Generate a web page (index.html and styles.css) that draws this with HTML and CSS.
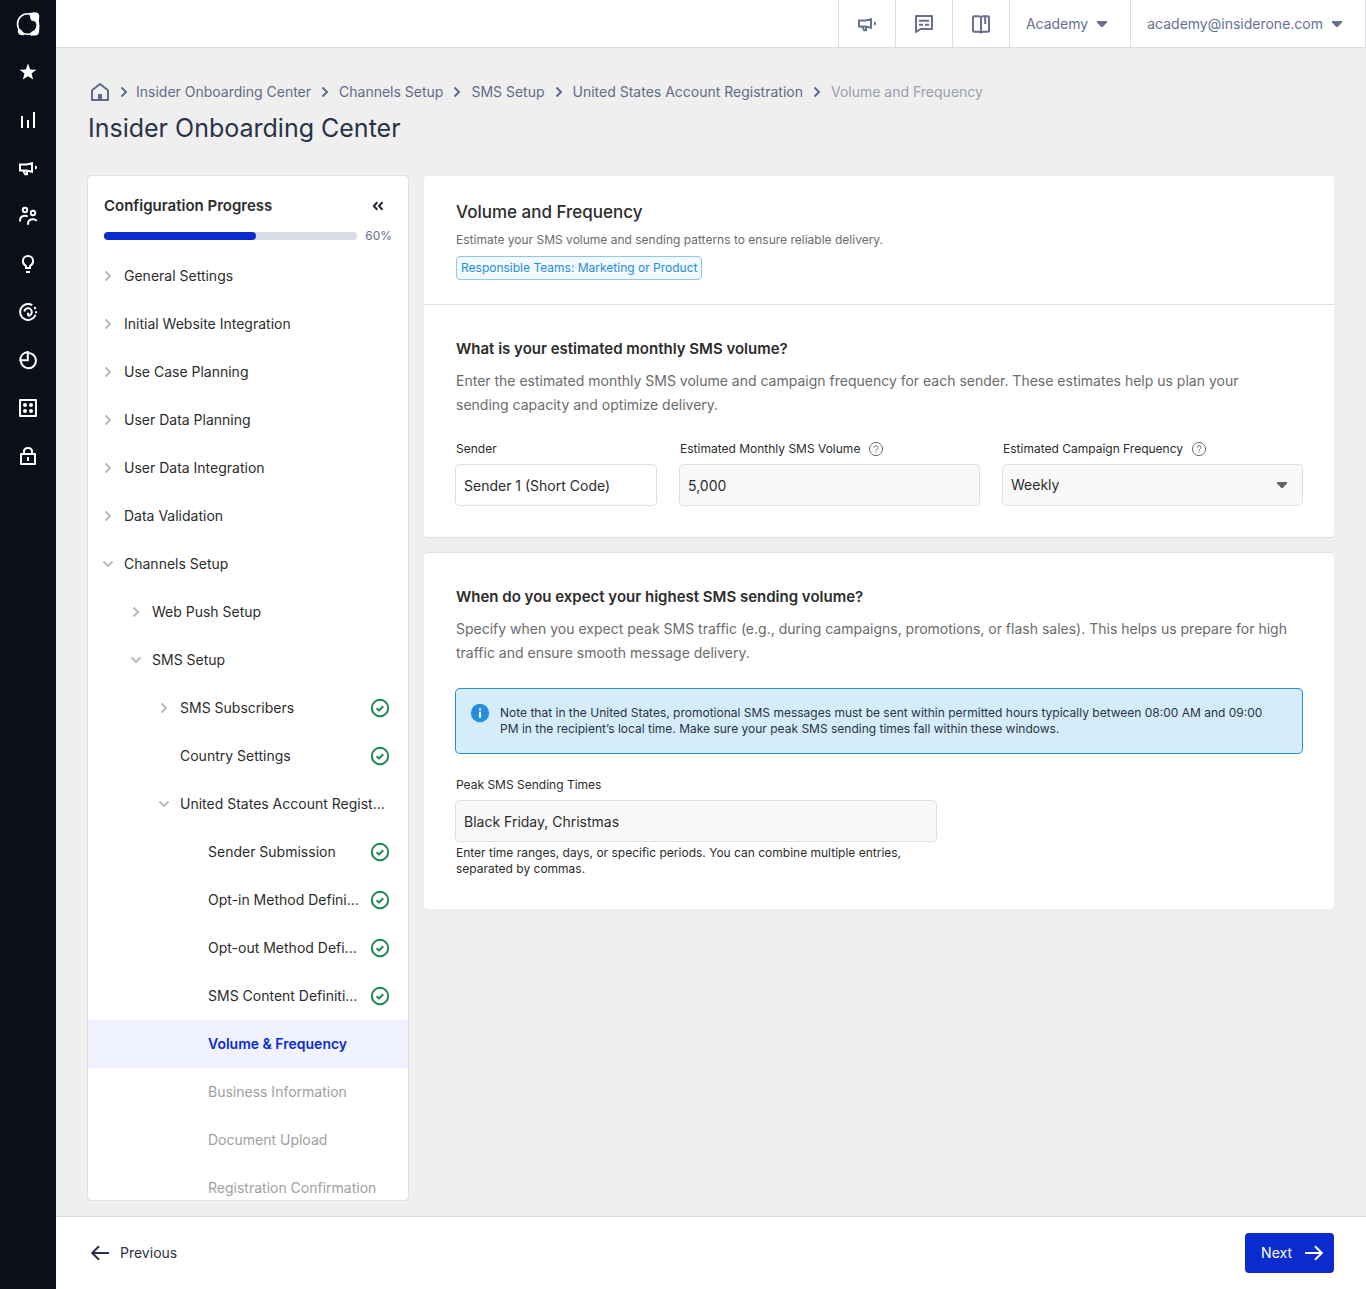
FILE: index.html
```
<!DOCTYPE html>
<html lang="en">
<head>
    <meta charset="UTF-8">
    <meta name="viewport" content="width=device-width, initial-scale=1">
    <title>Insider Onboarding Center</title>
    <link rel="stylesheet" href="styles.css">
</head>
<body>
    <!-- shared icons -->
    <svg class="sprite" aria-hidden="true">
        <symbol id="megaphone" viewBox="0 0 24 24">
            <path d="M4 8.500h6.500l5.500-1.300v8.600l-5.500-1.300H4zM7 14.500l2.200 3.700h1.800v-3.500" fill="none" stroke="currentColor" stroke-width="2"/>
            <path d="M19 9.500a2 2 0 0 1 0 4z" fill="currentColor"/>
        </symbol>
        <symbol id="caret" viewBox="0 0 24 24">
            <path d="M7 9h10v1.500L12.700 15h-1.400L7 10.500z" fill="currentColor"/>
        </symbol>
        <symbol id="sep" viewBox="0 0 24 24">
            <path d="M9.500 7.500L14 12l-4.500 4.500" fill="none" stroke="currentColor" stroke-width="2"/>
        </symbol>
        <symbol id="chevron" viewBox="0 0 16 16">
            <path d="M5.500 3.500L10 8l-4.500 4.500" fill="none" stroke="currentColor" stroke-width="2"/>
        </symbol>
        <symbol id="check" viewBox="0 0 24 24">
            <circle cx="12" cy="12" r="8.200" fill="none" stroke="currentColor" stroke-width="1.900"/>
            <path d="M8.600 12.200l2.300 2.200 4.400-4.200" fill="none" stroke="currentColor" stroke-width="1.900"/>
        </symbol>
        <symbol id="help" viewBox="0 0 16 16">
            <circle cx="8" cy="8" r="6.600" fill="none" stroke="currentColor"/>
            <path d="M6.100 6.600a1.900 1.900 0 1 1 2.900 1.600c-.7.500-1 .7-1 1.400M8 10.600v1.100" fill="none" stroke="currentColor"/>
        </symbol>
    </svg>

    <div class="app">
        <nav class="rail" aria-label="Main">
            <a href="#" aria-label="Home">
                <svg viewBox="0 0 24 24">
                    <circle cx="11.700" cy="12" r="10.200" fill="none" stroke="currentColor" stroke-width="1.600"/>
                    <path fill="currentColor" d="M12 1c2 0 3-.5 5-.6 3.500-.3 6.300.6 6.300 3.600 0 2-.7 3.500-.3 6 .5 2.600.7 5 .2 7.500-.3 1.700.1 2.500-.3 3.600-.6 2.200-2.700 2.500-4.900 2.500-1.500 0-2.500.2-3.500-.1 0-1.500-.3-2.500 1-3.700 1.200-1 2.700-1 3.700-2.600 1-1.700 1.400-3.500 1.100-5.200-.3-1.600-1.300-2.700-3-3-1.900-.3-3-1.500-3.100-3.300-.1-2-.4-3.200-2.200-4.700zM2 17.300c1.300 0 2.900 0 3.700 1 .8.900.8 1.700 1.200 2.500L8.500 23c-1.500.4-3.500.2-5-.6-1.300-.8-1.700-2-1.700-3.200z"/>
                </svg>
            </a>
            <a href="#" aria-label="Favorites">
                <svg viewBox="0 0 24 24"><path fill="currentColor" d="M12 3.500l2.200 5.900 6.200.3-4.900 3.900 1.700 6-5.200-3.400-5.200 3.400 1.700-6-4.900-3.900 6.200-.3z"/></svg>
            </a>
            <a href="#" aria-label="Analytics">
                <svg viewBox="0 0 24 24"><path fill="none" stroke="currentColor" stroke-width="2" d="M6 8v12M12 12v8M18 4v16"/></svg>
            </a>
            <a href="#" aria-label="Campaigns">
                <svg viewBox="0 0 24 24"><use href="#megaphone"/></svg>
            </a>
            <a href="#" aria-label="Audience">
                <svg viewBox="0 0 24 24"><g fill="none" stroke="currentColor" stroke-width="2"><circle cx="9" cy="6" r="2.200"/><circle cx="17" cy="9" r="2.200"/><path d="M4 17.500v-.7c0-3 2-5 5-5 1.200 0 2.100.3 2.800.7M12 20.800v-.6c0-3 2-4.900 5-4.900 1.600 0 2.900.5 3.800 1.500"/></g></svg>
            </a>
            <a href="#" aria-label="Recommendations">
                <svg viewBox="0 0 24 24"><path fill="none" stroke="currentColor" stroke-width="2" d="M10 17v-2.800C8 13 6.900 11.300 6.900 9a5.100 5.100 0 0 1 10.200 0c0 2.300-1.100 4-3.100 5.200V16h-4M10 20h4"/></svg>
            </a>
            <a href="#" aria-label="Experience">
                <svg viewBox="0 0 24 24"><g fill="none" stroke="currentColor" stroke-width="2"><path d="M16.200 5.100A8 8 0 1 0 19.500 14.800"/><path d="M18.300 7a8 8 0 0 1 1.200 2.200M20.100 11.300l-.1 2"/><path d="M8.400 11.500a3.700 3.700 0 1 1 3.600 4.200M12 15.700v-3"/></g></svg>
            </a>
            <a href="#" aria-label="Reports">
                <svg viewBox="0 0 24 24"><g fill="none" stroke="currentColor" stroke-width="2"><path d="M12.500 5a7.600 7.600 0 1 1-7.700 7.800"/><path d="M11.800 4v8.200H4.200C4.300 7.800 7.500 4.500 11.800 4z"/></g></svg>
            </a>
            <a href="#" aria-label="Components">
                <svg viewBox="0 0 24 24"><path fill="none" stroke="currentColor" stroke-width="2" stroke-linejoin="round" d="M4 4h16v16H4z"/><g fill="currentColor"><circle cx="9" cy="9" r="2"/><circle cx="15" cy="9" r="2"/><circle cx="9" cy="15" r="2"/><circle cx="15" cy="15" r="2"/></g></svg>
            </a>
            <a href="#" aria-label="Security">
                <svg viewBox="0 0 24 24"><path fill="none" stroke="currentColor" stroke-width="2" stroke-linejoin="round" d="M5 10h14v10H5zM8 10V7.500C8 5.300 9.700 4 12 4s4 1.300 4 3.500V10M12 13v4"/></svg>
            </a>
        </nav>

        <div class="page">
            <header class="topbar">
                <button class="topbar-item" aria-label="Announcements"><svg viewBox="0 0 24 24"><use href="#megaphone"/></svg></button>
                <button class="topbar-item" aria-label="Messages">
                    <svg viewBox="0 0 24 24"><path fill="none" stroke="currentColor" stroke-width="2" stroke-linejoin="round" d="M4 4h16v13H8.500L4 20zM7 8.700h10M7 12.700h4M13 12.700h4"/></svg>
                </button>
                <button class="topbar-item" aria-label="Documentation">
                    <svg viewBox="0 0 24 24"><path fill="none" stroke="currentColor" stroke-width="2" d="M5 4.200h5l2 1 2-1h5q1 0 1 1v13.500q0 1-1 1h-5l-2 .8-2-.8H5q-1 0-1-1V5.200q0-1 1-1zM12 5v15M16.200 5v7"/></svg>
                </button>
                <button class="topbar-item">Academy<svg viewBox="0 0 24 24"><use href="#caret"/></svg></button>
                <button class="topbar-item">academy@insiderone.com<svg viewBox="0 0 24 24"><use href="#caret"/></svg></button>
            </header>

            <main class="main">
                <nav class="breadcrumb" aria-label="Breadcrumb">
                    <a href="#" aria-label="Home"><svg viewBox="0 0 24 24"><path fill="none" stroke="currentColor" stroke-width="2" stroke-linejoin="round" d="M4 10.200L12 4l8 6.200V20H4z"/><path fill="currentColor" d="M10 14h4v6h-4z"/></svg></a>
                    <svg viewBox="0 0 24 24"><use href="#sep"/></svg>
                    <a href="#">Insider Onboarding Center</a>
                    <svg class="sep" viewBox="0 0 24 24"><use href="#sep"/></svg>
                    <a href="#">Channels Setup</a>
                    <svg class="sep" viewBox="0 0 24 24"><use href="#sep"/></svg>
                    <a href="#">SMS Setup</a>
                    <svg class="sep" viewBox="0 0 24 24"><use href="#sep"/></svg>
                    <a href="#">United States Account Registration</a>
                    <svg class="sep" viewBox="0 0 24 24"><use href="#sep"/></svg>
                    <span class="current">Volume and Frequency</span>
                </nav>
                <h1>Insider Onboarding Center</h1>

                <div class="columns">
                    <aside class="progress-panel">
                        <div class="panel-head">
                            <h2>Configuration Progress</h2>
                            <button class="collapse" aria-label="Collapse"><svg viewBox="0 0 24 24"><path fill="none" stroke="currentColor" stroke-width="2" d="M11.300 8.300L7.800 12l3.500 3.700M16.500 8.300L13 12l3.500 3.700"/></svg></button>
                        </div>
                        <div class="progress">
                            <div class="bar"><div class="bar-fill" style="width: 60%"></div></div>
                            <span>60%</span>
                        </div>
                        <ul class="tree">
                            <li><a href="#" class="node"><svg class="arrow"><use href="#chevron"/></svg><span>General Settings</span></a></li>
                            <li><a href="#" class="node"><svg class="arrow"><use href="#chevron"/></svg><span>Initial Website Integration</span></a></li>
                            <li><a href="#" class="node"><svg class="arrow"><use href="#chevron"/></svg><span>Use Case Planning</span></a></li>
                            <li><a href="#" class="node"><svg class="arrow"><use href="#chevron"/></svg><span>User Data Planning</span></a></li>
                            <li><a href="#" class="node"><svg class="arrow"><use href="#chevron"/></svg><span>User Data Integration</span></a></li>
                            <li><a href="#" class="node"><svg class="arrow"><use href="#chevron"/></svg><span>Data Validation</span></a></li>
                            <li><a href="#" class="node"><svg class="arrow open"><use href="#chevron"/></svg><span>Channels Setup</span></a></li>
                            <li><a href="#" class="node level-1"><svg class="arrow"><use href="#chevron"/></svg><span>Web Push Setup</span></a></li>
                            <li><a href="#" class="node level-1"><svg class="arrow open"><use href="#chevron"/></svg><span>SMS Setup</span></a></li>
                            <li><a href="#" class="node level-2"><svg class="arrow"><use href="#chevron"/></svg><span>SMS Subscribers</span><svg class="done"><use href="#check"/></svg></a></li>
                            <li><a href="#" class="node level-2 leaf"><span>Country Settings</span><svg class="done"><use href="#check"/></svg></a></li>
                            <li><a href="#" class="node level-2"><svg class="arrow open"><use href="#chevron"/></svg><span>United States Account Regist...</span></a></li>
                            <li><a href="#" class="node level-3"><span>Sender Submission</span><svg class="done"><use href="#check"/></svg></a></li>
                            <li><a href="#" class="node level-3"><span>Opt-in Method Defini...</span><svg class="done"><use href="#check"/></svg></a></li>
                            <li><a href="#" class="node level-3"><span>Opt-out Method Defi...</span><svg class="done"><use href="#check"/></svg></a></li>
                            <li><a href="#" class="node level-3"><span>SMS Content Definiti...</span><svg class="done"><use href="#check"/></svg></a></li>
                            <li><a href="#" class="node level-3 active" aria-current="page"><span>Volume &amp; Frequency</span></a></li>
                            <li><a class="node level-3 disabled"><span>Business Information</span></a></li>
                            <li><a class="node level-3 disabled"><span>Document Upload</span></a></li>
                            <li><a class="node level-3 disabled"><span>Registration Confirmation</span></a></li>
                        </ul>
                    </aside>

                    <div class="content">
                        <section class="card">
                            <div class="card-head">
                                <h2>Volume and Frequency</h2>
                                <p>Estimate your SMS volume and sending patterns to ensure reliable delivery.</p>
                                <span class="tag">Responsible Teams: Marketing or Product</span>
                            </div>
                            <div class="card-body">
                                <h3>What is your estimated monthly SMS volume?</h3>
                                <p class="lead">Enter the estimated monthly SMS volume and campaign frequency for each sender. These estimates help us plan your sending capacity and optimize delivery.</p>
                                <div class="fields">
                                    <div class="field sender">
                                        <label for="sender">Sender</label>
                                        <input id="sender" class="plain" type="text" value="Sender 1 (Short Code)">
                                    </div>
                                    <div class="field">
                                        <label for="volume">Estimated Monthly SMS Volume <svg><use href="#help"/></svg></label>
                                        <input id="volume" type="text" value="5,000">
                                    </div>
                                    <div class="field">
                                        <label for="frequency">Estimated Campaign Frequency <svg><use href="#help"/></svg></label>
                                        <div class="select">
                                            <select id="frequency"><option>Weekly</option></select>
                                            <svg viewBox="0 0 24 24"><use href="#caret"/></svg>
                                        </div>
                                    </div>
                                </div>
                            </div>
                        </section>

                        <section class="card">
                            <div class="card-body">
                                <h3>When do you expect your highest SMS sending volume?</h3>
                                <p class="lead">Specify when you expect peak SMS traffic (e.g., during campaigns, promotions, or flash sales). This helps us prepare for high traffic and ensure smooth message delivery.</p>
                                <div class="alert">
                                    <svg viewBox="0 4 24 16"><circle cx="12" cy="12" r="9.200" fill="#238ee0"/><path fill="#fff" d="M11 7.200h2v2h-2zM11 10.800h2v6h-2z"/></svg>
                                    <p>Note that in the United States, promotional SMS messages must be sent within permitted hours typically between 08:00 AM and 09:00 PM in the recipient’s local time. Make sure your peak SMS sending times fall within these windows.</p>
                                </div>
                                <div class="field peak">
                                    <label for="peak">Peak SMS Sending Times</label>
                                    <input id="peak" type="text" value="Black Friday, Christmas">
                                    <p class="hint">Enter time ranges, days, or specific periods. You can combine multiple entries, separated by commas.</p>
                                </div>
                            </div>
                        </section>
                    </div>
                </div>
            </main>

            <footer class="footer">
                <button class="btn"><svg viewBox="0 0 24 24"><path fill="none" stroke="currentColor" stroke-width="2" d="M21 12H4M11 5.200L4.200 12l6.800 6.800"/></svg>Previous</button>
                <button class="btn primary">Next<svg viewBox="0 0 24 24"><path fill="none" stroke="currentColor" stroke-width="2" d="M3 12h17M13 5.200l6.800 6.800-6.800 6.800"/></svg></button>
            </footer>
        </div>
    </div>
</body>
</html>
```
FILE: styles.css
```
* {
    box-sizing: border-box;
}

body {
    margin: 0;
    font-family: Inter, "Liberation Sans", sans-serif;
    font-size: 14px;
    line-height: 24px;
    color: #2c2c2c;
    background: #efefef;
}

h1, h2, h3, p, ul {
    margin: 0;
    padding: 0;
}

a {
    color: inherit;
    text-decoration: none;
}

button, input, select {
    font: inherit;
    color: inherit;
}

button {
    padding: 0;
    border: 0;
    background: none;
    cursor: pointer;
}

svg {
    display: block;
    flex: none;
    width: 24px;
    height: 24px;
}

.sprite {
    position: absolute;
    width: 0;
    height: 0;
}

.app {
    display: flex;
    height: 100vh;
}

/* dark icon rail */
.rail {
    flex: none;
    width: 56px;
    background: #0a0f1a;
    color: #fff;
}

.rail a {
    display: flex;
    align-items: center;
    justify-content: center;
    height: 48px;
}

.page {
    flex: 1;
    min-width: 0;
    display: flex;
    flex-direction: column;
}

/* top bar */
.topbar {
    flex: none;
    display: flex;
    justify-content: flex-end;
    height: 48px;
    background: #fff;
    border-bottom: 1px solid #dadce4;
    color: #66718f;
}

.topbar-item {
    display: flex;
    align-items: center;
    gap: 2px;
    padding: 0 16px;
    border-left: 1px solid #dadce4;
}

.topbar-item:last-child {
    border-right: 1px solid #dadce4;
}

/* main area */
.main {
    flex: 1;
    min-height: 0;
    display: flex;
    flex-direction: column;
    padding: 32px 32px 16px;
}

.breadcrumb {
    display: flex;
    align-items: center;
    color: #5f6b8a;
}

.breadcrumb .sep {
    margin: 0 2px;
}

.breadcrumb .current {
    color: #9a9fab;
}

h1 {
    margin-bottom: 24px;
    font-size: 25px;
    font-weight: 400;
    line-height: 48px;
    color: #2a3247;
}

.columns {
    flex: 1;
    min-height: 0;
    display: flex;
    gap: 16px;
}

/* configuration progress */
.progress-panel {
    flex: none;
    width: 320px;
    overflow: hidden;
    background: #fff;
    border-radius: 4px;
    box-shadow: 0 0 0 1px #dfdfdf;
}

.panel-head {
    display: flex;
    align-items: center;
    justify-content: space-between;
    padding: 16px 18px 8px 16px;
}

.panel-head h2 {
    font-size: 15px;
    font-weight: 600;
    line-height: 28px;
}

.collapse {
    color: #1f2637;
}

.progress {
    display: flex;
    align-items: center;
    gap: 8px;
    padding: 0 16px 8px;
    font-size: 12px;
    line-height: 16px;
    color: #66718f;
}

.bar {
    flex: 1;
    height: 8px;
    border-radius: 4px;
    background: #d9dce5;
}

.bar-fill {
    height: 8px;
    border-radius: 4px;
    background: #0a2bce;
}

.tree {
    list-style: none;
}

.node {
    display: flex;
    align-items: center;
    height: 48px;
    padding: 0 16px 0 12px;
}

.node span {
    flex: 1;
    min-width: 0;
    white-space: nowrap;
}

.level-1 {
    padding-left: 40px;
}

.level-2 {
    padding-left: 68px;
}

.level-2.leaf {
    padding-left: 92px;
}

.level-3 {
    padding-left: 120px;
}

.arrow {
    width: 16px;
    height: 16px;
    margin-right: 8px;
    color: #b9b9b9;
}

.arrow.open {
    transform: rotate(90deg);
}

.done {
    color: #138a4b;
}

.node.active {
    background: #f0f2ff;
    color: #0a2bce;
    font-weight: 600;
}

.node.disabled {
    color: #a0a0a0;
}

/* cards */
.content {
    flex: 1;
    min-width: 0;
    display: flex;
    flex-direction: column;
    gap: 16px;
}

.card {
    background: #fff;
    border-radius: 4px;
}

.card:first-child {
    box-shadow: 0 1px 0 #dfdfdf;
}

.card:last-child {
    box-shadow: 0 -1px 0 #dfdfdf;
}

.card-head {
    padding: 24px 32px;
    border-bottom: 1px solid #dfdfdf;
}

.card-head h2 {
    font-size: 17px;
    font-weight: 500;
}

.card-head p {
    margin: 8px 0;
    font-size: 12px;
    line-height: 16px;
    color: #6b6b6b;
}

.tag {
    display: block;
    width: fit-content;
    padding: 0 4px;
    border: 1px solid #8cc8f5;
    border-radius: 4px;
    background: #f2f9ff;
    font-size: 12px;
    line-height: 22px;
    color: #238ee0;
}

.card-body {
    padding: 32px;
}

h3 {
    font-size: 15px;
    font-weight: 600;
    line-height: 24px;
}

.lead {
    margin: 8px 0 24px;
    padding-right: 12px;
    color: #6b6b6b;
}

.fields {
    display: flex;
    gap: 24px;
}

.field {
    flex: 1;
    min-width: 0;
}

.field.sender {
    flex: 0 0 200px;
}

.field.peak {
    max-width: 480px;
}

.field label {
    display: flex;
    align-items: center;
    gap: 8px;
    margin-bottom: 8px;
    font-size: 12px;
    line-height: 16px;
}

.field label svg {
    width: 16px;
    height: 16px;
    color: #6b6b6b;
}

.field input,
.field select {
    display: block;
    width: 100%;
    height: 40px;
    padding: 0 8px;
    border: 0;
    border-radius: 4px;
    background: #f9f9f9;
    box-shadow: 0 0 0 1px #dfdfdf;
    appearance: none;
}

.field input.plain {
    background: #fff;
}

.select {
    position: relative;
}

.select svg {
    position: absolute;
    top: 8px;
    right: 8px;
    color: #666;
    pointer-events: none;
}

.hint {
    margin-top: 4px;
    font-size: 12px;
    line-height: 16px;
}

.alert {
    display: flex;
    gap: 8px;
    margin-bottom: 24px;
    padding: 16px 24px 16px 12px;
    border-radius: 4px;
    background: #d4edf9;
    box-shadow: 0 0 0 1px #238ee0;
    font-size: 12px;
    line-height: 16px;
    color: #2a3247;
}

.alert svg {
    height: 16px;
    overflow: visible;
}

/* footer */
.footer {
    flex: none;
    display: flex;
    align-items: center;
    justify-content: space-between;
    padding: 16px 32px;
    background: #fff;
    border-top: 1px solid #dadce4;
}

.btn {
    display: flex;
    align-items: center;
    gap: 8px;
    height: 40px;
    color: #2a3247;
}

.btn.primary {
    gap: 10px;
    padding: 0 8px 0 16px;
    border-radius: 4px;
    background: #0a2bce;
    color: #fff;
}
```
